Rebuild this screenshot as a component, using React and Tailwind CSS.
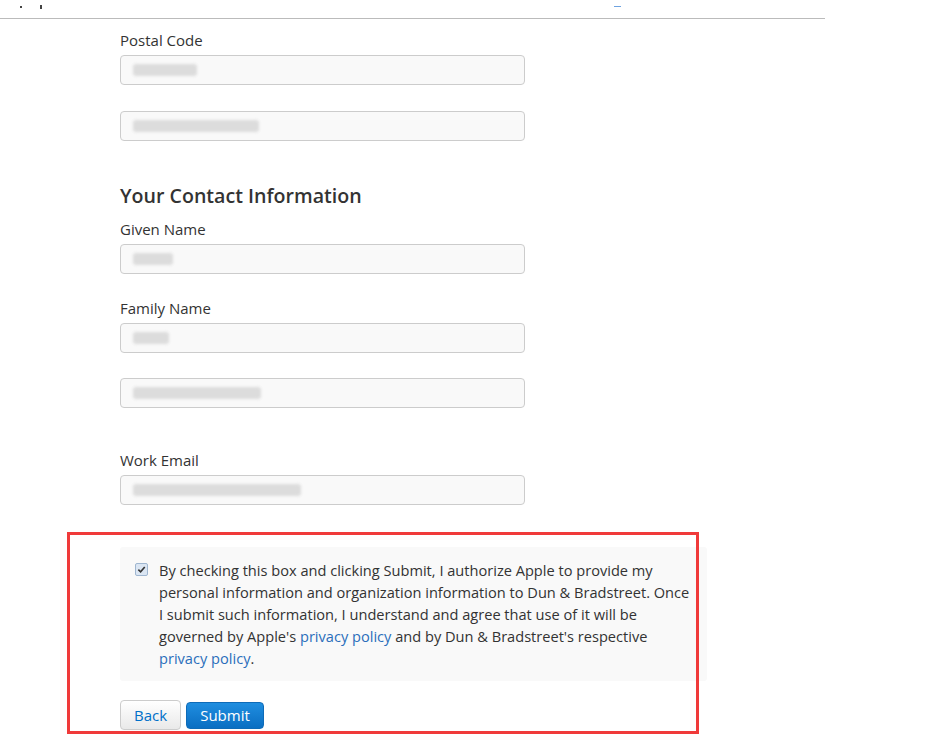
import React from 'react'

const font = { fontFamily: '"Open Sans", "Liberation Sans", sans-serif' }

function Blur({ w }) {
  return (
    <div className="flex items-center gap-[4px] pl-[12px]">
      <div className="h-[12px] rounded-[3px] bg-[#dcdcdc] blur-[1.5px]" style={{ width: w }} />
    </div>
  )
}

function Field({ label, blur, className = '' }) {
  return (
    <div className={className}>
      {label && <div className="text-[15px] leading-[20px] text-[#333] mb-[5px]">{label}</div>}
      <div className="w-[405px] h-[30px] rounded-[4px] border border-[#ccc] bg-[#f9f9f9] flex items-center">
        <Blur w={blur} />
      </div>
    </div>
  )
}

export default function App() {
  return (
    <div className="bg-white min-h-screen w-[936px] h-[749px] overflow-hidden text-[#333]" style={font}>
      <div className="w-[825px] h-[19px] border-b border-[#bbb] relative">
        <span className="absolute left-[20px] top-[6px] w-[2px] h-[2px] bg-[#444]" />
        <span className="absolute left-[40px] top-[5px] w-[2px] h-[4px] bg-[#444]" />
        <span className="absolute left-[614px] top-[6px] w-[7px] h-[1px] bg-[#6fa3e0]" />
      </div>

      <div className="pl-[120px]">
        <Field label="Postal Code" blur={64} className="mt-[11px]" />
        <Field blur={126} className="mt-[26px]" />

        <h2 className="mt-[41px] text-[19.6px] leading-[28px] font-semibold text-[#333]">Your Contact Information</h2>

        <Field label="Given Name" blur={40} className="mt-[9px]" />
        <Field label="Family Name" blur={36} className="mt-[24px]" />
        <Field blur={128} className="mt-[25px]" />
        <Field label="Work Email" blur={168} className="mt-[42px]" />

        <div className="relative mt-[42px]">
          <div className="absolute left-[-53px] top-[-15px] w-[632px] h-[202px] border-[3px] border-[#f03a3a] pointer-events-none" />
          <div className="w-[587px] bg-[#f9f9f9] rounded-[3px] pl-[15px] pr-[8px] py-[12px] flex gap-[11px]">
            <span className="mt-[4px] shrink-0 w-[13px] h-[13px] rounded-[2px] border border-[#9fb6d0] bg-[#dbe6f3] flex items-center justify-center">
              <svg width="9" height="9" viewBox="0 0 10 10">
                <path d="M1.5 5.2 L4 7.6 L8.6 2.2" fill="none" stroke="#333" strokeWidth="1.8" />
              </svg>
            </span>
            <p className="text-[14.6px] leading-[22px] text-[#333] whitespace-nowrap">
              By checking this box and clicking Submit, I authorize Apple to provide my<br />
              personal information and organization information to Dun &amp; Bradstreet. Once<br />
              I submit such information, I understand and agree that use of it will be<br />
              governed by Apple's <a className="text-[#2a6ebb]">privacy policy</a> and by Dun &amp; Bradstreet's respective<br />
              <a className="text-[#2a6ebb]">privacy policy</a>.
            </p>
          </div>

          <div className="mt-[19px] flex items-center gap-[5px]">
            <button className="h-[30px] w-[61px] rounded-[4px] border border-[#ccc] bg-gradient-to-b from-white to-[#e9e9e9] text-[15px] text-[#0070c9]">
              Back
            </button>
            <button className="h-[27px] w-[78px] rounded-[4px] border border-[#0e6bb8] bg-gradient-to-b from-[#1f8ee0] to-[#0a6ec2] text-[15px] font-medium text-white">
              Submit
            </button>
          </div>
        </div>
      </div>
    </div>
  )
}
